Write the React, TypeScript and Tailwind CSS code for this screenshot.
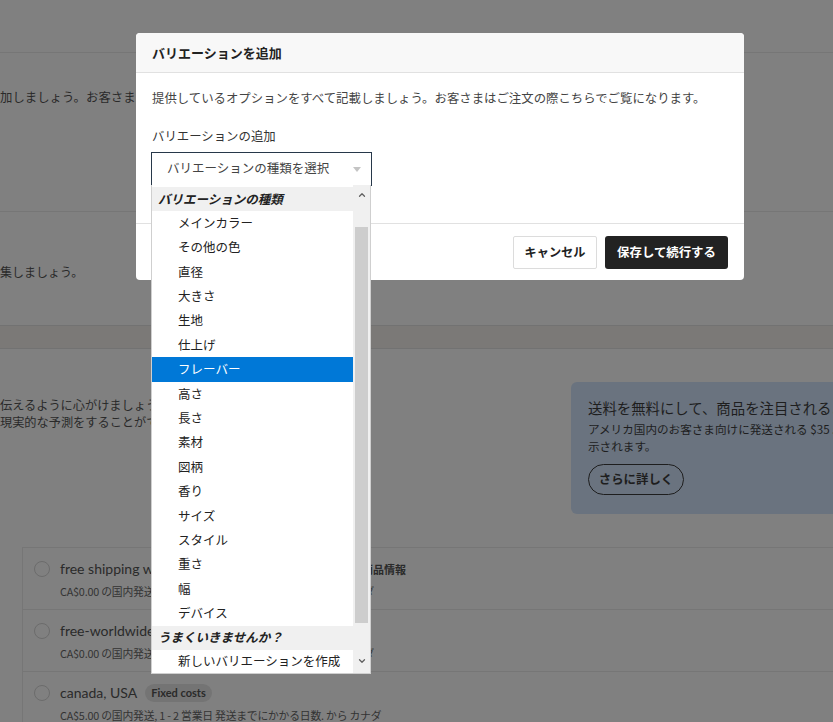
import { ChevronDown, ChevronUp } from 'lucide-react';

const variationTypes = [
    'メインカラー',
    'その他の色',
    '直径',
    '大きさ',
    '生地',
    '仕上げ',
    'フレーバー',
    '高さ',
    '長さ',
    '素材',
    '図柄',
    '香り',
    'サイズ',
    'スタイル',
    '重さ',
    '幅',
    'デバイス',
];

const profiles = [
    { name: 'free shipping with', badge: '', detail: 'CA$0.00 の国内発送, 1-2 営業日 発送までにかかる日数 から カナダ' },
    { name: 'free-worldwide', badge: '', detail: 'CA$0.00 の国内発送, 1-2 営業日 発送までにかかる日数 から カナダ' },
    { name: 'canada, USA', badge: 'Fixed costs', detail: 'CA$5.00 の国内発送, 1 - 2 営業日 発送までにかかる日数. から カナダ' },
];

const font = "font-['Noto_Sans_CJK_JP','Noto_Sans',sans-serif]";

export default function App() {
    return (
        <div className={`relative h-[722px] w-[833px] overflow-hidden bg-[#808080] text-[#2a2a2a] ${font}`}>
            {/* Page behind the overlay */}
            <div className="flex flex-col">
                <div className="h-[53px] border-b border-[#767676]" />
                <div className="flex h-[159px] items-start border-b border-[#767676] pt-[34px]">
                    <p className="text-[12.4px] leading-[20px]">加しましょう。お客さま</p>
                </div>
                <div className="flex h-[113px] items-start pt-[50px]">
                    <p className="text-[12px] leading-[20px]">集しましょう。</p>
                </div>
                <div className="h-[24px] border-y border-[#727272] bg-[#7b7977]" />
                <div className="flex h-[198px] items-start justify-between">
                    <div className="pt-[48px] text-[12.2px] leading-[17px]">
                        <p>伝えるように心がけましょう。</p>
                        <p>現実的な予測をすることができます。</p>
                    </div>
                    <div className="mt-[33px] h-[132px] w-[262px] overflow-hidden rounded-l-[6px] bg-[#6a737f] pl-[17px] pt-[16px] text-[#1e1e1e]">
                        <p className="whitespace-nowrap text-[14.4px] leading-[20px]">
                            送料を無料にして、商品を注目されるようにしましょう
                        </p>
                        <p className="mt-[3px] whitespace-nowrap text-[11.6px] leading-[17px]">
                            アメリカ国内のお客さま向けに発送される $35 以上の注文は送料無料と表
                        </p>
                        <p className="text-[11.6px] leading-[17px]">示されます。</p>
                        <button className="mt-[9px] h-[31px] w-[96px] rounded-full border-[1.5px] border-[#1e1e1e] text-[12.4px] font-bold">
                            さらに詳しく
                        </button>
                    </div>
                </div>
                <div className="ml-[22px] border-l border-t border-[#767676]">
                    {profiles.map((p) => (
                        <div key={p.name} className="relative flex h-[62px] gap-[10px] border-b border-[#767676] pl-[11px] pt-[12px]">
                            <span className="mt-[1px] h-[16px] w-[16px] shrink-0 rounded-full border border-[#6c6c6c]" />
                            <div className="flex-1">
                                <div className="flex items-center gap-[8px]">
                                    <span className="whitespace-nowrap text-[14px] leading-[18px] font-['Lato','Liberation_Sans',sans-serif]">
                                        {p.name}
                                    </span>
                                    {p.badge && (
                                        <span className="rounded-full bg-[#747474] px-[6px] text-[11px] leading-[18px] font-bold font-['Lato','Liberation_Sans',sans-serif]">
                                            {p.badge}
                                        </span>
                                    )}
                                </div>
                                <p className="mt-[5px] whitespace-nowrap text-[10.8px] leading-[16px] tracking-[-0.2px] text-[#333]">
                                    {p.detail}
                                </p>
                            </div>
                            {p.name === 'free shipping with' && (
                                <span className="absolute left-[339px] top-[13px] text-[11px] font-bold">商品情報</span>
                            )}
                        </div>
                    ))}
                </div>
            </div>

            {/* Modal */}
            <div className="absolute left-[136px] top-[33px] w-[608px] rounded-[4px] bg-white text-[#222]">
                <div className="flex h-[40px] items-center rounded-t-[4px] border-b border-[#e1e1e1] bg-[#f8f8f8] px-[16px]">
                    <h2 className="text-[13px] font-bold">バリエーションを追加</h2>
                </div>
                <div className="h-[150px] px-[16px] pt-[15px]">
                    <p className="text-[12.4px] leading-[20px] text-[#444]">
                        提供しているオプションをすべて記載しましょう。お客さまはご注文の際こちらでご覧になります。
                    </p>
                    <p className="mt-[18px] text-[12.4px] leading-[20px] text-[#333]">バリエーションの追加</p>
                    <div className="relative mt-[6px] -ml-[1px] flex h-[34px] w-[221px] items-center border border-[#27384a] pb-[2px] pl-[15px] text-[12.5px] text-[#444]">
                        バリエーションの種類を選択
                        <svg className="absolute right-[10px] top-[14px]" width="8" height="5" viewBox="0 0 8 5">
                            <path d="M0 0h8L4 5z" fill="#c4c4c4" />
                        </svg>
                    </div>
                </div>
                <div className="flex h-[57px] items-center justify-end gap-[8px] border-t border-[#e1e1e1] px-[16px]">
                    <button className="h-[33px] w-[84px] rounded-[2px] border border-[#dcdcdc] bg-white text-[12.2px] font-bold">
                        キャンセル
                    </button>
                    <button className="h-[33px] w-[123px] rounded-[3px] bg-[#222] text-[12.4px] font-bold text-white">
                        保存して続行する
                    </button>
                </div>
            </div>

            {/* Open native select list */}
            <div className="absolute left-[151px] top-[185px] flex h-[489px] w-[220px] border border-t-0 border-[#cfcfcf] bg-white text-[12.5px] text-[#222]">
                <div className="flex-1 pt-[2px]">
                    <div className="flex h-[24px] items-center bg-[#f0f0f0] pl-[6px] font-bold italic">
                        バリエーションの種類
                    </div>
                    {variationTypes.map((t) => (
                        <div
                            key={t}
                            className={
                                t === 'フレーバー'
                                    ? 'flex h-[24.4px] items-center bg-[#0078d7] pl-[26px] text-white'
                                    : 'flex h-[24.4px] items-center pl-[26px]'
                            }
                        >
                            {t}
                        </div>
                    ))}
                    <div className="flex h-[24px] items-center bg-[#f0f0f0] pl-[6px] font-bold italic">
                        うまくいきませんか？
                    </div>
                    <div className="flex h-[24px] items-center pl-[26px]">新しいバリエーションを作成</div>
                </div>
                <div className="flex w-[17px] flex-col bg-[#f0f0f0]">
                    <div className="flex h-[20px] items-center justify-center">
                        <ChevronUp className="h-[10px] w-[10px] text-[#606060]" strokeWidth={3} />
                    </div>
                    <div className="mx-[2px] mt-[22px] h-[396px] bg-[#cdcdcd]" />
                    <div className="mt-auto flex h-[22px] items-center justify-center pb-[2px]">
                        <ChevronDown className="h-[10px] w-[10px] text-[#606060]" strokeWidth={3} />
                    </div>
                </div>
            </div>
        </div>
    );
}
